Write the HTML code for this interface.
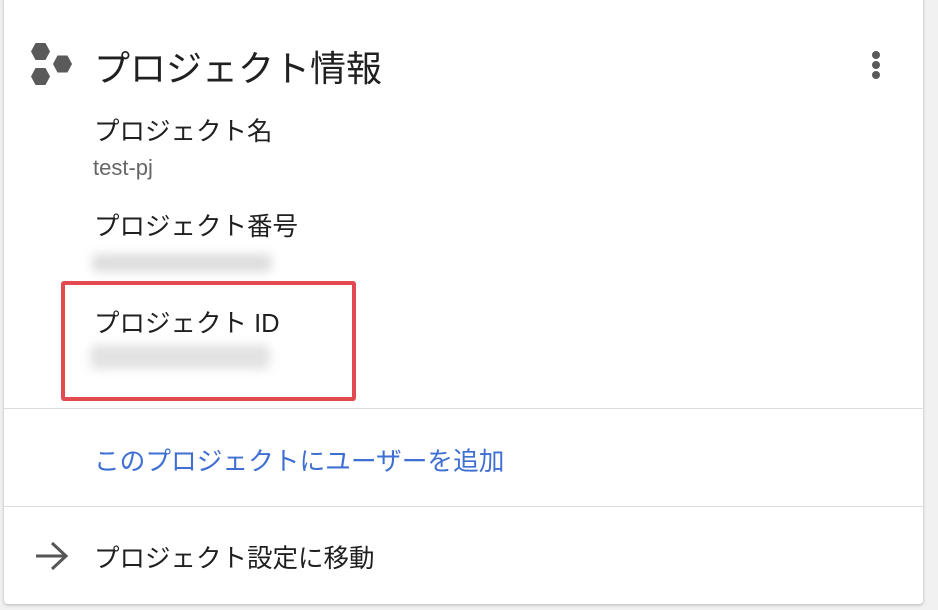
<!DOCTYPE html><html><head><meta charset="utf-8"><style>
body{margin:0;width:938px;height:610px;background:#f1f1f1;font-family:"Liberation Sans","Noto Sans CJK JP",sans-serif;position:relative;overflow:hidden}
.card{position:absolute;left:4px;top:-4px;width:919px;height:608px;background:#fff;border-radius:4px;box-shadow:0 1px 3px rgba(0,0,0,.25)}
.t{position:absolute;white-space:nowrap;color:#202020}
.hr{position:absolute;left:4px;width:919px;height:1px;background:#dcdcdc}
.blur{position:absolute;background:#ddd;filter:blur(5px);border-radius:6px}
</style></head><body>
<div class="card"></div>
<svg style="position:absolute;left:0;top:0" width="90" height="100">
<g fill="#5a5a5a">
<polygon points="31,51.5 35.5,43 45.5,43 50,51.5 45.5,60 35.5,60"/>
<polygon points="53,64 57.5,55.5 67.5,55.5 72,64 67.5,72.5 57.5,72.5"/>
<polygon points="31,76.5 35.5,68 45.5,68 50,76.5 45.5,85 35.5,85"/>
</g></svg>
<div class="t" style="left:94px;top:40px;font-size:36px">プロジェクト情報</div>
<svg style="position:absolute;left:868px;top:50px" width="16" height="32"><g fill="#5a5a5a"><circle cx="8" cy="5" r="4"/><circle cx="8" cy="15" r="4"/><circle cx="8" cy="25" r="4"/></g></svg>
<div class="t" style="left:94px;top:111px;font-size:25.5px">プロジェクト名</div>
<div class="t" style="left:93px;top:155px;font-size:22px;color:#666">test-pj</div>
<div class="t" style="left:94px;top:206px;font-size:25.5px">プロジェクト番号</div>
<div class="blur" style="left:92px;top:254px;width:180px;height:18px"></div>
<div class="t" style="left:94px;top:303px;font-size:25.5px">プロジェクト ID</div>
<div class="blur" style="left:90px;top:345px;width:180px;height:24px;background:#e2e2e2"></div>
<div style="position:absolute;left:61px;top:281px;width:287px;height:112px;border:4px solid #e24a4f;border-radius:3px"></div>
<div class="hr" style="top:408px"></div>
<div class="t" style="left:94px;top:441px;font-size:25.7px;color:#3f6fd3">このプロジェクトにユーザーを追加</div>
<div class="hr" style="top:506px"></div>
<svg style="position:absolute;left:34px;top:540px" width="36" height="32"><path d="M2 16H32M18 3L32 16L18 29" stroke="#555" stroke-width="3" fill="none"/></svg>
<div class="t" style="left:94px;top:538px;font-size:25.5px">プロジェクト設定に移動</div>
</body></html>
